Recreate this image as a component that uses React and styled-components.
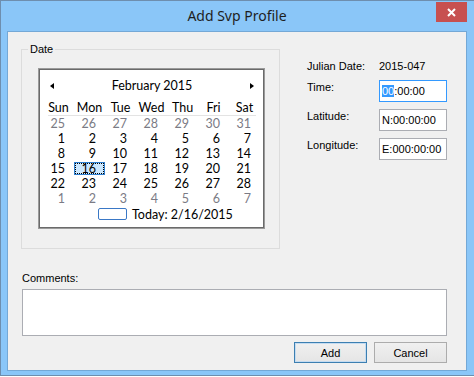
import styled, { createGlobalStyle } from "styled-components";

const GlobalStyle = createGlobalStyle`
  html, body {
    margin: 0;
    padding: 0;
    background: #ffffff;
  }
  * {
    box-sizing: border-box;
  }
`;

const sans = `"Liberation Sans", Arial, sans-serif`;
const ui = `"Noto Sans", "Open Sans", sans-serif`;
const cal = `Lato, "Noto Sans", sans-serif`;

const StyledWindow = styled.div`
  width: 474px;
  height: 376px;
  background-color: #8ac6f8;
  border: 1px solid #6e8eae;
  border-right: none;
  padding: 0 7px 4px 6px;
  display: flex;
  flex-direction: column;
`;

const StyledTitleBar = styled.div`
  height: 30px;
  flex: none;
  display: grid;
  grid-template-columns: 1fr auto 1fr;
  align-items: start;
  h1 {
    margin: 0;
    padding-top: 5px;
    font-family: ${ui};
    font-weight: 400;
    font-size: 14px;
    line-height: 20px;
    color: #1e1e1e;
    grid-column: 2;
  }
`;

const StyledCloseBtn = styled.button`
  grid-column: 3;
  justify-self: end;
  margin-top: 1px;
  width: 31px;
  height: 20px;
  border: none;
  padding: 0;
  background-color: #c75050;
  display: flex;
  align-items: center;
  justify-content: center;
`;

const StyledClient = styled.div`
  flex: 1;
  background-color: #f0f0f0;
  border: 1px solid #74a8d6;
  padding: 11px 19px 6px 13px;
  display: flex;
  flex-direction: column;
  font-family: ${sans};
  font-size: 11px;
  color: #000;
`;

const StyledTopRow = styled.div`
  display: flex;
  gap: 27px;
`;

const StyledGroup = styled.fieldset`
  margin: 0;
  width: 259px;
  border: 1px solid #dcdcdc;
  padding: 12px 13px 19px 16px;
  legend {
    margin-left: -10px;
    padding: 0 2px;
    font-size: 11px;
    line-height: 13px;
  }
`;

const StyledCalendar = styled.div`
  width: 227px;
  height: 161px;
  background-color: #fff;
  border: 1px solid #9a9a9a;
  box-shadow: inset 0 0 0 1px #6a6a6a;
  padding: 7px 3px 0 4px;
  display: flex;
  flex-direction: column;
  font-family: ${cal};
  font-size: 12.5px;
  color: #000;
`;

const StyledMonthBar = styled.div`
  height: 20px;
  display: flex;
  align-items: center;
  justify-content: space-between;
  padding: 0 7px 0 7px;
  span {
    line-height: 20px;
  }
`;

const StyledArrow = styled.i`
  width: 0;
  height: 0;
  border-top: 3.5px solid transparent;
  border-bottom: 3.5px solid transparent;
  ${({ right }) =>
    right ? "border-left: 4px solid #000;" : "border-right: 4px solid #000;"}
`;

const StyledGrid = styled.div`
  display: grid;
  grid-template-columns: repeat(7, 31px);
`;

const StyledDayNames = styled(StyledGrid)`
  margin-top: 3px;
  height: 17px;
  background: linear-gradient(#e3e3e3, #e3e3e3) no-repeat 5px 100% / 208px 1px;
  span {
    text-align: center;
    line-height: 17px;
  }
`;

const StyledDay = styled.span`
  height: 15px;
  line-height: 15px;
  text-align: right;
  padding-right: 9px;
  color: ${({ muted }) => (muted ? "#7b7b85" : "#000")};
  ${({ selected }) =>
    selected &&
    `
    margin: 1px 0;
    height: 13px;
    line-height: 11px;
    background-color: #cce8ff;
    border: 1px solid #2f7fd0;
    outline: 1px dotted #000;
    outline-offset: -2px;
    padding-right: 8px;
  `}
`;

const StyledToday = styled.div`
  height: 16px;
  display: flex;
  align-items: center;
  gap: 5px;
  padding-left: 55px;
  i {
    width: 29px;
    height: 12px;
    border: 1px solid #3a78c6;
    border-radius: 2px;
  }
`;

const StyledFields = styled.div`
  margin-top: 17px;
  display: grid;
  grid-template-columns: 72px 68px;
  row-gap: 7px;
  align-items: start;
  align-content: start;
`;

const StyledLabel = styled.span`
  line-height: 13px;
  padding-top: ${({ top }) => top || 0}px;
`;

const StyledInput = styled.div`
  height: 22px;
  background-color: #fff;
  border: 1px solid ${({ focused }) => (focused ? "#3399ff" : "#abadb3")};
  padding: 0 2px;
  line-height: 20px;
  white-space: nowrap;
  mark {
    background-color: #3399ff;
    color: #fff;
  }
`;

const StyledComments = styled.div`
  margin-top: 23px;
  margin-left: 1px;
  display: flex;
  flex-direction: column;
  gap: 4px;
  span {
    line-height: 13px;
  }
`;

const StyledTextArea = styled.div`
  height: 47px;
  background-color: #fff;
  border: 1px solid #abadb3;
`;

const StyledButtons = styled.div`
  margin-top: 6px;
  display: flex;
  justify-content: flex-end;
  gap: 7px;
`;

const StyledButton = styled.button`
  width: 73px;
  height: 21px;
  padding: 0;
  font-family: ${sans};
  font-size: 11px;
  color: #000;
  background: linear-gradient(#f0f0f0, #e5e5e5);
  border: 1px solid ${({ primary }) => (primary ? "#3c7fb1" : "#acacac")};
  ${({ primary }) => primary && "box-shadow: inset 0 0 0 1px #c5dcf1;"}
`;

const dayNames = ["Sun", "Mon", "Tue", "Wed", "Thu", "Fri", "Sat"];

function buildDays() {
  const days = [];
  for (let d = 25; d <= 31; d++) days.push({ n: d, muted: true });
  for (let d = 1; d <= 28; d++) days.push({ n: d });
  for (let d = 1; d <= 7; d++) days.push({ n: d, muted: true });
  return days;
}

function Calendar() {
  const days = buildDays();
  return (
    <StyledCalendar>
      <StyledMonthBar>
        <StyledArrow />
        <span>February 2015</span>
        <StyledArrow right />
      </StyledMonthBar>
      <StyledDayNames>
        {dayNames.map((d) => (
          <span key={d}>{d}</span>
        ))}
      </StyledDayNames>
      <StyledGrid>
        {days.map((d, i) => (
          <StyledDay
            key={i}
            muted={d.muted}
            selected={!d.muted && d.n === 16}
          >
            {d.n}
          </StyledDay>
        ))}
      </StyledGrid>
      <StyledToday>
        <i />
        <span>Today: 2/16/2015</span>
      </StyledToday>
    </StyledCalendar>
  );
}

export default function App() {
  return (
    <>
      <GlobalStyle />
      <StyledWindow>
        <StyledTitleBar>
          <h1>Add Svp Profile</h1>
          <StyledCloseBtn>
            <svg width="9" height="9" viewBox="0 0 9 9">
              <path d="M1 1L8 8M8 1L1 8" stroke="#fff" strokeWidth="2" />
            </svg>
          </StyledCloseBtn>
        </StyledTitleBar>
        <StyledClient>
          <StyledTopRow>
            <StyledGroup>
              <legend>Date</legend>
              <Calendar />
            </StyledGroup>
            <StyledFields>
              <StyledLabel>Julian Date:</StyledLabel>
              <StyledLabel>2015-047</StyledLabel>
              <StyledLabel top={1}>Time:</StyledLabel>
              <StyledInput focused>
                <mark>00</mark>:00:00
              </StyledInput>
              <StyledLabel top={1}>Latitude:</StyledLabel>
              <StyledInput>N:00:00:00</StyledInput>
              <StyledLabel top={1}>Longitude:</StyledLabel>
              <StyledInput>E:000:00:00</StyledInput>
            </StyledFields>
          </StyledTopRow>
          <StyledComments>
            <span>Comments:</span>
            <StyledTextArea />
          </StyledComments>
          <StyledButtons>
            <StyledButton primary>Add</StyledButton>
            <StyledButton>Cancel</StyledButton>
          </StyledButtons>
        </StyledClient>
      </StyledWindow>
    </>
  );
}
